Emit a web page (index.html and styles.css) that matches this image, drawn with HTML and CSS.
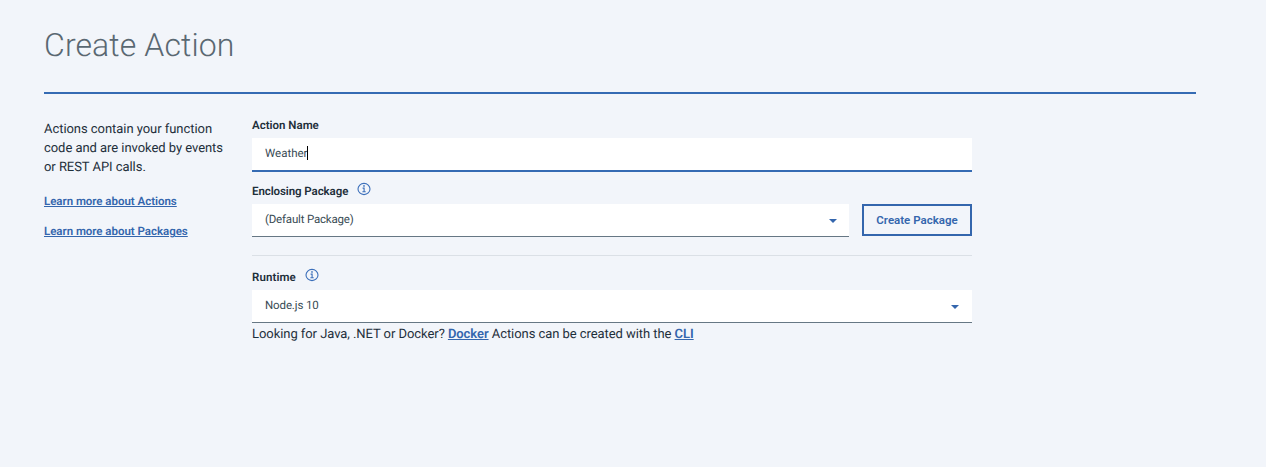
FILE: index.html
```
<!DOCTYPE html>
<html lang="en">
<head>
<meta charset="utf-8">
<title>Create Action</title>
<link rel="stylesheet" href="styles.css">
</head>
<body>
<main class="page">
  <header class="header"><h1 class="title">Create Action</h1></header>
  <div class="content">
    <aside class="intro">
      <p class="intro-text">Actions contain your function<br>code and are invoked by events<br>or REST API calls.</p>
      <a class="learn">Learn more about Actions</a>
      <a class="learn">Learn more about Packages</a>
    </aside>
    <form class="form">
      <div class="label">Action Name</div>
      <div class="field focused"><span>Weather</span><i class="caret"></i></div>
      <div class="label label-package"><span>Enclosing Package</span>
        <svg class="info" viewBox="0 0 14 14"><ellipse cx="7" cy="7" rx="6" ry="5.6"/><path d="M5.6 6.1h1.5v3.7M5.4 9.8h3.3"/><circle class="dot" cx="7" cy="3.9" r=".85"/></svg>
      </div>
      <div class="row">
        <div class="field select package"><span>(Default Package)</span><svg class="arrow" viewBox="0 0 8 4"><path d="M0 0h8L4 4z"/></svg></div>
        <button class="button" type="button">Create Package</button>
      </div>
      <div class="divider"></div>
      <div class="label label-runtime"><span>Runtime</span>
        <svg class="info" viewBox="0 0 14 14"><ellipse cx="7" cy="7" rx="6" ry="5.6"/><path d="M5.6 6.1h1.5v3.7M5.4 9.8h3.3"/><circle class="dot" cx="7" cy="3.9" r=".85"/></svg>
      </div>
      <div class="field select runtime"><span>Node.js 10</span><svg class="arrow" viewBox="0 0 8 4"><path d="M0 0h8L4 4z"/></svg></div>
      <p class="hint">Looking for Java, .NET or Docker? <a>Docker</a> Actions can be created with the <a>CLI</a></p>
    </form>
  </div>
</main>
</body>
</html>
```
FILE: styles.css
```
* { box-sizing: border-box; }
body { margin: 0; background: #f2f5fa; color: #1e2f3a; font-family: Roboto, "Open Sans", sans-serif; text-rendering: geometricPrecision; }
.page { width: 1196px; padding-left: 44px; }
.header { height: 94px; padding-top: 24px; border-bottom: 2px solid #356bb3; }
.title { margin: 0; font-size: 32px; line-height: 42px; font-weight: 300; color: #5a6872; letter-spacing: 0.1px; white-space: nowrap; }
.content { display: flex; }
.intro { width: 208px; flex: none; padding-top: 26px; }
.intro-text { margin: 0 0 15px; font-size: 13px; line-height: 19px; letter-spacing: -0.05px; white-space: nowrap; }
.learn { display: block; height: 30px; line-height: 18px; font-size: 11.5px; letter-spacing: -0.02px; }
a { color: #3466ad; font-weight: 600; text-decoration: underline; text-underline-offset: 1px; text-decoration-thickness: 1px; }
.form { width: 720px; padding-top: 24px; }
.label { height: 20px; font-size: 11.5px; font-weight: 600; line-height: 14px; }
.label-package, .label-runtime { display: flex; align-items: flex-start; gap: 9px; }
.label-package { height: 32px; padding-top: 12px; letter-spacing: -0.08px; }
.label-runtime { height: 34px; padding-top: 14px; letter-spacing: 0.1px; }
.info { width: 14px; height: 14px; margin-top: -2px; fill: none; stroke: #3b6fba; stroke-width: 1.1; }
.info .dot { fill: #3b6fba; stroke: none; }
.field { display: flex; align-items: center; height: 33px; padding: 0 13px; background: #fff; color: #394b54; font-size: 11.5px; border-bottom: 1px solid #667784; }
.focused { height: 34px; padding-bottom: 2px; border-bottom: 2px solid #356bb3; }
.caret { width: 1px; height: 14px; background: #000; }
.select { flex: 1; justify-content: space-between; padding-right: 12px; padding-bottom: 2px; }
.package { letter-spacing: -0.19px; }
.runtime { padding-right: 13px; letter-spacing: -0.12px; }
.arrow { width: 8px; height: 4px; margin-top: 4px; fill: #3466ad; }
.row { display: flex; gap: 13px; height: 33px; }
.button { width: 110px; height: 32px; padding: 0; background: transparent; border: 2px solid #3466ad; color: #3466ad; font: 600 11.5px Roboto, sans-serif; white-space: nowrap; }
.divider { height: 1px; margin-top: 18px; background: #dbe0e6; }
.hint { margin: 2px 0 0; font-size: 13px; line-height: 20px; letter-spacing: -0.06px; white-space: nowrap; }
```
